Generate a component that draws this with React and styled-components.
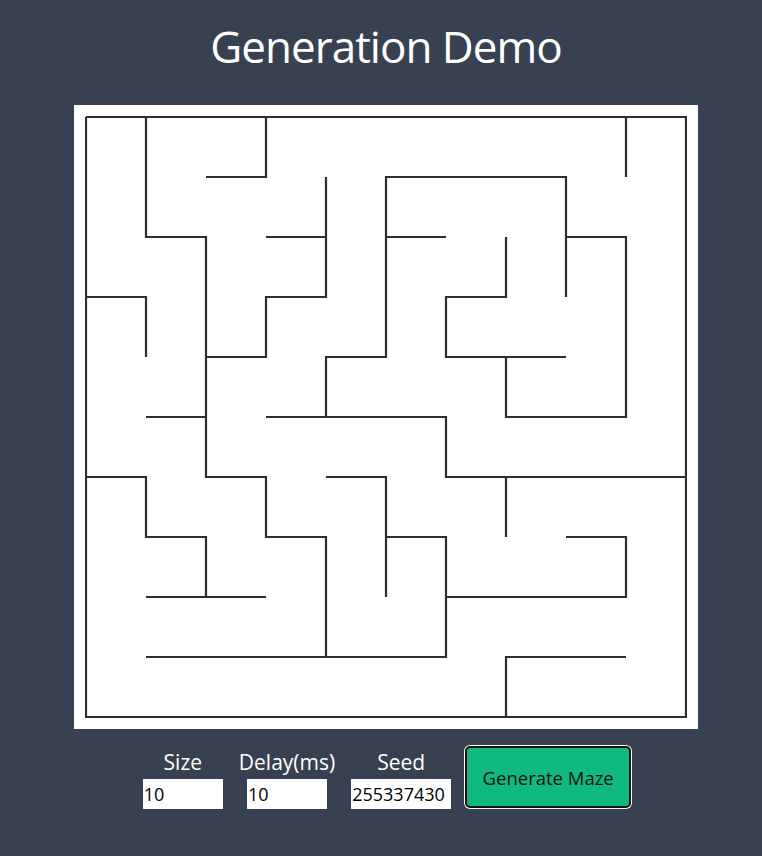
import React from "react";
import styled, { createGlobalStyle } from "styled-components";

const GlobalStyle = createGlobalStyle`
  html, body {
    margin: 0;
    padding: 0;
    background: #374151;
  }
  body {
    font-family: "Open Sans", "Noto Sans", sans-serif;
  }
`;

const Page = styled.div`
  display: flex;
  flex-direction: column;
  align-items: center;
  padding: 18px 0 40px 10px;
  min-height: 856px;
  box-sizing: border-box;
`;

const Title = styled.h1`
  margin: 0;
  font-size: 44px;
  font-weight: 400;
  letter-spacing: -1px;
  line-height: 57px;
  color: #ffffff;
`;

const MazeBox = styled.div`
  margin-top: 30px;
  background: #ffffff;
  padding: 11px;
  display: flex;
`;

const Controls = styled.div`
  margin-top: 16px;
  margin-left: 3px;
  display: flex;
  align-items: flex-end;
  gap: 16px;
`;

const Field = styled.label`
  display: flex;
  flex-direction: column;
  align-items: center;
`;

const FieldLabel = styled.span`
  font-size: 21px;
  line-height: 24px;
  color: #ffffff;
  margin-bottom: 5px;
`;

const NumberInput = styled.input`
  width: ${(p) => p.$w}px;
  height: 30px;
  box-sizing: border-box;
  border: none;
  outline: none;
  padding: 0 1px;
  margin: 0;
  background: #ffffff;
  color: #000000;
  font-family: "Open Sans", "Noto Sans", sans-serif;
  font-size: 18px;
`;

const GenerateButton = styled.button`
  width: 166px;
  height: 62px;
  margin: 1px 1px 1px -2px;
  box-sizing: border-box;
  background: #10b981;
  border: 2px solid #111111;
  border-radius: 5px;
  box-shadow: 0 0 0 1px #ffffff;
  color: #111111;
  font-family: "Open Sans", "Noto Sans", sans-serif;
  font-size: 18.5px;
  cursor: pointer;
`;

const CELL = 60;
const OFF = 1;

const walls = [
  [[0, 0], [10, 0], [10, 10], [0, 10], [0, 0]],
  [[1, 0], [1, 2], [2, 2], [2, 6], [3, 6], [3, 7], [4, 7], [4, 9]],
  [[3, 0], [3, 1], [2, 1]],
  [[4, 1], [4, 3], [3, 3], [3, 4], [2, 4]],
  [[3, 2], [4, 2]],
  [[0, 3], [1, 3], [1, 4]],
  [[1, 5], [2, 5]],
  [[3, 5], [6, 5], [6, 6], [10, 6]],
  [[4, 5], [4, 4], [5, 4], [5, 1], [8, 1], [8, 3]],
  [[5, 2], [6, 2]],
  [[7, 2], [7, 3], [6, 3], [6, 4], [8, 4]],
  [[7, 4], [7, 5], [9, 5], [9, 2], [8, 2]],
  [[9, 0], [9, 1]],
  [[7, 6], [7, 7]],
  [[8, 7], [9, 7], [9, 8], [6, 8]],
  [[4, 6], [5, 6], [5, 8]],
  [[5, 7], [6, 7], [6, 9], [1, 9]],
  [[7, 10], [7, 9], [9, 9]],
  [[0, 6], [1, 6], [1, 7], [2, 7], [2, 8]],
  [[1, 8], [3, 8]],
];

function Maze() {
  return (
    <svg width="602" height="602" viewBox="0 0 602 602">
      {walls.map((pts, i) => (
        <polyline
          key={i}
          points={pts.map(([x, y]) => `${x * CELL + OFF},${y * CELL + OFF}`).join(" ")}
          fill="none"
          stroke="#2e2e2e"
          strokeWidth="2.2"
          strokeLinejoin="miter"
          strokeLinecap="butt"
        />
      ))}
    </svg>
  );
}

export default function App() {
  return (
    <>
      <GlobalStyle />
      <Page>
        <Title>Generation Demo</Title>
        <MazeBox>
          <Maze />
        </MazeBox>
        <Controls>
          <Field>
            <FieldLabel>Size</FieldLabel>
            <NumberInput $w={80} type="text" defaultValue="10" />
          </Field>
          <Field>
            <FieldLabel>Delay(ms)</FieldLabel>
            <NumberInput $w={80} type="text" defaultValue="10" />
          </Field>
          <Field>
            <FieldLabel>Seed</FieldLabel>
            <NumberInput $w={100} type="text" defaultValue="255337430" />
          </Field>
          <GenerateButton>Generate Maze</GenerateButton>
        </Controls>
      </Page>
    </>
  );
}
